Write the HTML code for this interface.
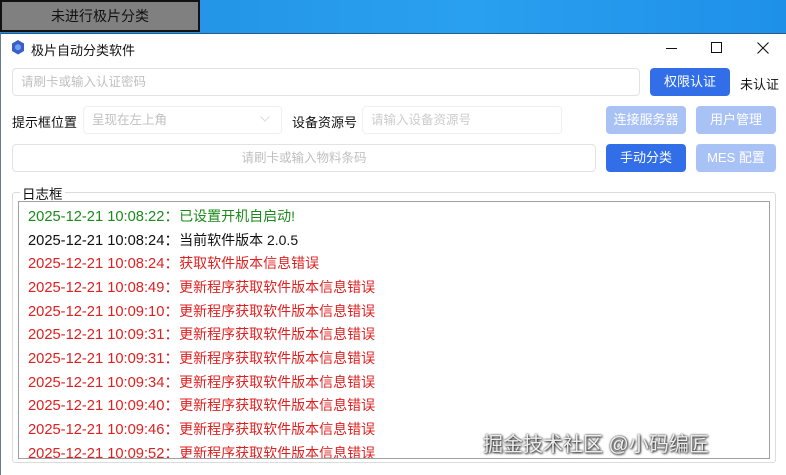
<!DOCTYPE html>
<html><head><meta charset="utf-8"><style>
*{margin:0;padding:0;box-sizing:border-box}
body{width:786px;height:475px;overflow:hidden;position:relative;font-family:"Liberation Sans","Microsoft YaHei","Noto Sans CJK SC",sans-serif;background:#fff}
.abs{position:absolute}
.top{left:0;top:0;width:786px;height:33px;background:linear-gradient(90deg,#1f8de0,#2aa0f0 60%,#1e90e8);}
.tag{left:0;top:0;width:200px;height:32px;background:#808080;border:2px solid #111;color:#111;font-size:14px;text-align:center;line-height:28px}
.win{left:0;top:33px;width:786px;height:442px;background:#fff;border-left:1px solid #6a7a8a;border-top:1px solid #2a5a8a}
.inp{border:1px solid #e3e3e3;border-radius:4px;background:#fff;color:#c0c0c0;font-size:12.5px;line-height:26px;padding-left:8px}
.btn{border-radius:4px;color:#fff;font-size:13px;text-align:center;line-height:28px}
.b1{background:#316ee8}.b2{background:#a9c2f5}
.lbl{font-size:13px;color:#111}
.log{font-size:14.7px;white-space:nowrap}
.log span{font-size:14px}
.r{color:#e02020}
</style></head><body>
<div class="abs top"></div>
<div class="abs tag">未进行极片分类</div>
<div class="abs win"></div>
<svg class="abs" style="left:11px;top:40px" width="14" height="15" viewBox="0 0 14 15"><polygon points="7,0 13,3.5 13,11 7,14.5 1,11 1,3.5" fill="#3a5fc8"/><circle cx="7" cy="7.3" r="3" fill="#6fa0f0"/></svg>
<div class="abs lbl" style="left:31px;top:40px">极片自动分类软件</div>
<div class="abs" style="left:666px;top:48px;width:11px;height:1px;background:#111"></div>
<div class="abs" style="left:711px;top:42px;width:11px;height:11px;border:1px solid #111"></div>
<svg class="abs" style="left:757px;top:42px" width="12" height="12"><path d="M0.5 0.5L11.5 11.5M11.5 0.5L0.5 11.5" stroke="#111" stroke-width="1.1"/></svg>
<div class="abs inp" style="left:12px;top:68px;width:628px;height:28px">请刷卡或输入认证密码</div>
<div class="abs btn b1" style="left:650px;top:68px;width:80px;height:28px">权限认证</div>
<div class="abs lbl" style="left:740px;top:74px">未认证</div>
<div class="abs lbl" style="left:12px;top:112px">提示框位置</div>
<div class="abs inp" style="left:83px;top:106px;width:199px;height:28px;border-color:#f0f0f0">呈现在左上角</div>
<svg class="abs" style="left:260px;top:116px" width="10" height="6"><path d="M0.5 0.5L5 5L9.5 0.5" stroke="#ddd" fill="none"/></svg>
<div class="abs lbl" style="left:292px;top:112px">设备资源号</div>
<div class="abs inp" style="left:362px;top:106px;width:200px;height:28px;border-color:#f0f0f0;color:#ccc">请输入设备资源号</div>
<div class="abs btn b2" style="left:606px;top:106px;width:80px;height:28px">连接服务器</div>
<div class="abs btn b2" style="left:696px;top:106px;width:80px;height:28px">用户管理</div>
<div class="abs inp" style="left:12px;top:144px;width:584px;height:28px;text-align:center;padding:0">请刷卡或输入物料条码</div>
<div class="abs btn b1" style="left:606px;top:144px;width:80px;height:28px">手动分类</div>
<div class="abs btn b2" style="left:696px;top:144px;width:80px;height:28px">MES 配置</div>
<div class="abs" style="left:12px;top:192px;width:764px;height:271px;border:1px solid #dcdcdc;border-radius:3px"></div>
<div class="abs lbl" style="left:20px;top:183px;background:#fff;padding:0 2px;font-size:13.5px">日志框</div>
<div class="abs" style="left:18px;top:201px;width:752px;height:258px;border:1px solid #a0a0a0;background:#fff"></div>
<div class="abs" style="left:18px;top:202px;width:750px;height:256px;overflow:hidden">
<div class="abs log" style="left:10px;top:3px;color:#1a8a1a">2025-12-21 10:08:22：<span>已设置开机自启动!</span></div>
<div class="abs log" style="left:10px;top:27px;color:#111">2025-12-21 10:08:24：<span>当前软件版本 2.0.5</span></div>
<div class="abs log r" style="left:10px;top:50px">2025-12-21 10:08:24：<span>获取软件版本信息错误</span></div>
<div class="abs log r" style="left:10px;top:74px">2025-12-21 10:08:49：<span>更新程序获取软件版本信息错误</span></div>
<div class="abs log r" style="left:10px;top:98px">2025-12-21 10:09:10：<span>更新程序获取软件版本信息错误</span></div>
<div class="abs log r" style="left:10px;top:121px">2025-12-21 10:09:31：<span>更新程序获取软件版本信息错误</span></div>
<div class="abs log r" style="left:10px;top:145px">2025-12-21 10:09:31：<span>更新程序获取软件版本信息错误</span></div>
<div class="abs log r" style="left:10px;top:169px">2025-12-21 10:09:34：<span>更新程序获取软件版本信息错误</span></div>
<div class="abs log r" style="left:10px;top:192px">2025-12-21 10:09:40：<span>更新程序获取软件版本信息错误</span></div>
<div class="abs log r" style="left:10px;top:216px">2025-12-21 10:09:46：<span>更新程序获取软件版本信息错误</span></div>
<div class="abs log r" style="left:10px;top:240px">2025-12-21 10:09:52：<span>更新程序获取软件版本信息错误</span></div>
</div>
<div class="abs" style="left:483px;top:428px;font-size:20px;color:#eee;text-shadow:0 0 2px #222,1px 1px 2px #222;white-space:nowrap">掘金技术社区 @小码编匠</div>
</body></html>
